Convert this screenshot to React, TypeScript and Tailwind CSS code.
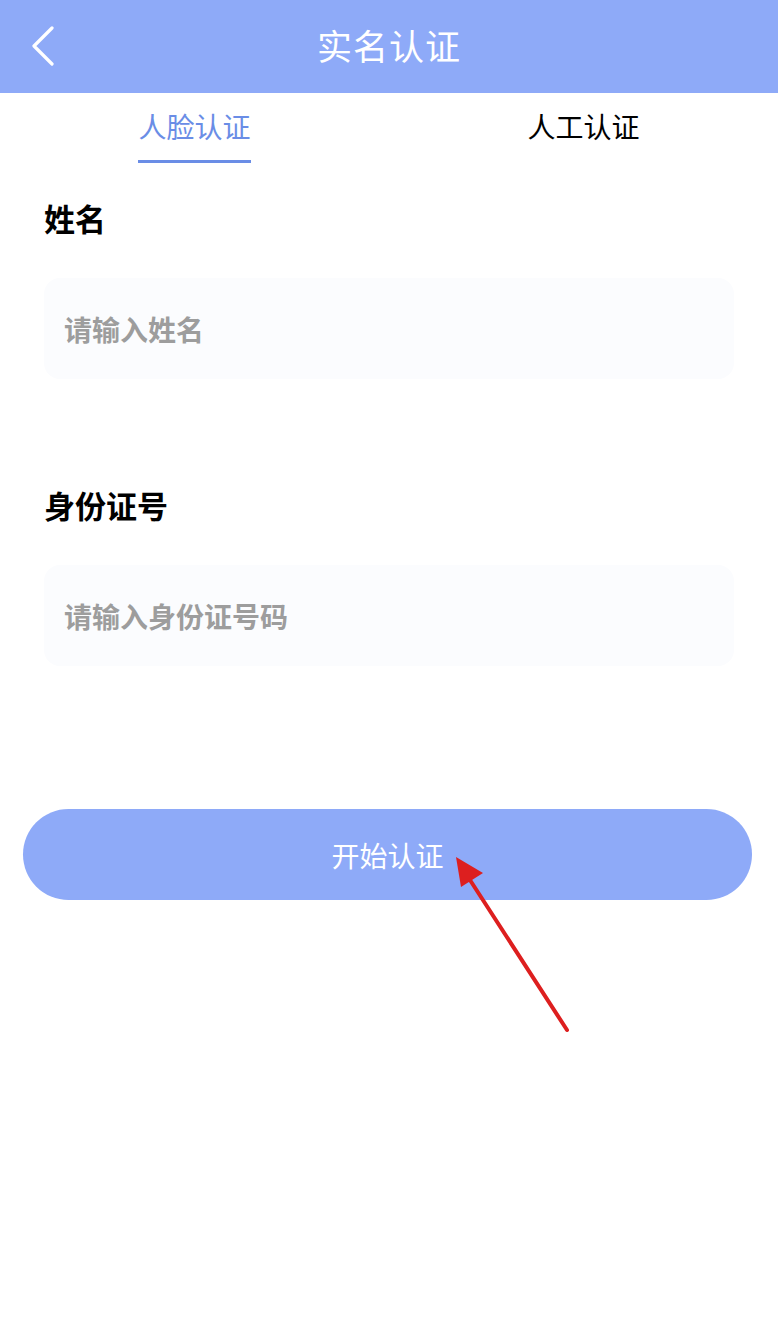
import React from 'react';

const font = { fontFamily: '"Noto Sans CJK SC", "Noto Sans", sans-serif' };

const Field: React.FC<{ label: string; placeholder: string }> = ({ label, placeholder }) => (
    <div className="flex flex-col">
        <div className="text-[31px] font-bold text-black leading-none">{label}</div>
        <div className="mt-[45px] h-[101px] rounded-2xl bg-[#fbfcfe] flex items-center px-5">
            <span className="text-[28px] font-semibold text-[#9d9d9d]">{placeholder}</span>
        </div>
    </div>
);

export default function App() {
    return (
        <div className="relative w-[778px] min-h-[1323px] bg-white" style={font}>
            {/* Header */}
            <div className="relative h-[93px] bg-[#8eaaf8] flex items-center justify-center">
                <svg className="absolute left-[30px] top-[26px]" width="26" height="40" viewBox="0 0 26 40">
                    <path d="M22 2 L4 20 L22 38" fill="none" stroke="#fff" strokeWidth="3.2" strokeLinecap="round" strokeLinejoin="round" />
                </svg>
                <span className="text-[35px] text-white tracking-[1px] -mt-[3px]">实名认证</span>
            </div>

            {/* Tabs */}
            <div className="flex h-[72px]">
                <div className="flex-1 flex justify-center">
                    <div className="flex flex-col items-center pt-[16px]">
                        <span className="text-[28px] leading-none text-[#6a8de6] py-[3px]">人脸认证</span>
                        <div className="mt-[17px] h-[3px] w-[113px] bg-[#6a8de6]" />
                    </div>
                </div>
                <div className="flex-1 flex justify-center pt-[19px]">
                    <span className="text-[28px] leading-none text-black">人工认证</span>
                </div>
            </div>

            {/* Form */}
            <div className="px-[44px] pt-[37px] flex flex-col gap-[110px]">
                <Field label="姓名" placeholder="请输入姓名" />
                <Field label="身份证号" placeholder="请输入身份证号码" />
            </div>

            {/* Button */}
            <div className="px-[23px] pt-[143px]">
                <button className="w-[729px] h-[91px] rounded-full bg-[#8eaaf8] text-white text-[28px] flex items-center justify-center">
                    开始认证
                </button>
            </div>

            {/* Annotation arrow */}
            <svg className="absolute left-0 top-0 pointer-events-none" width="778" height="1323">
                <line x1="567" y1="1030" x2="470" y2="880" stroke="#dd1f1f" strokeWidth="4" strokeLinecap="round" />
                <polygon points="456,857 483,873 461,887" fill="#dd1f1f" />
            </svg>
        </div>
    );
}
